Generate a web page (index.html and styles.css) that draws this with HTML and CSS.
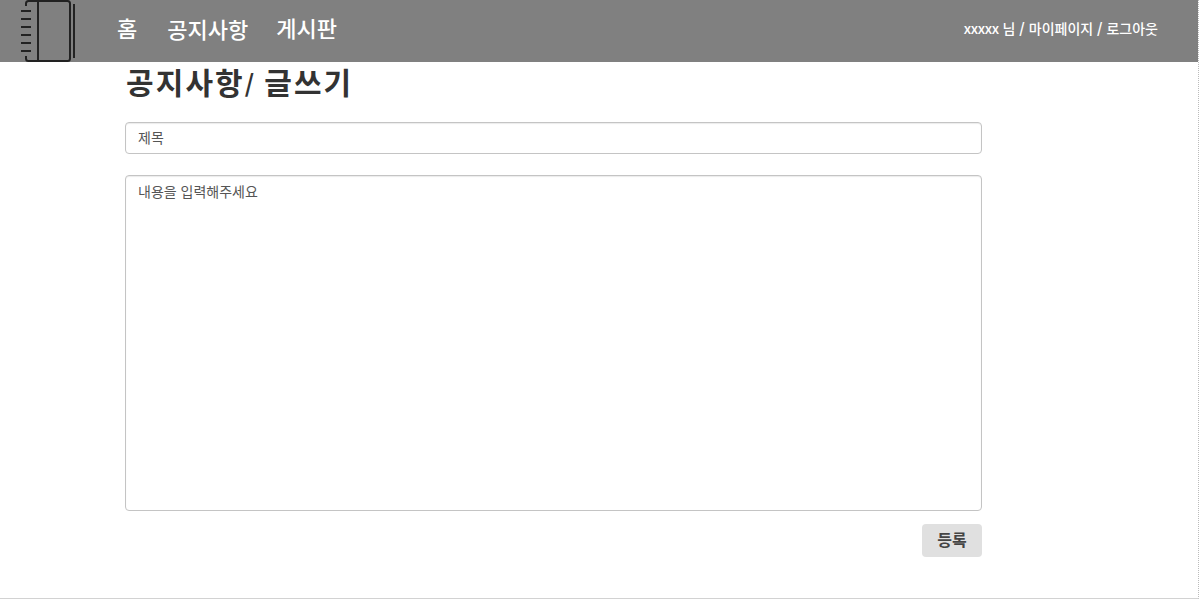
FILE: index.html
```
<!DOCTYPE html>
<html lang="ko">
<head>
    <meta charset="UTF-8">
    <title>공지사항 글쓰기</title>
    <link rel="stylesheet" href="styles.css">
</head>
<body>
    <div class="page">
        <header class="header">
            <a class="logo" href="#">
                <svg width="56" height="62" viewBox="0 0 56 62" fill="none" stroke="#222" stroke-width="2">
                    <path d="M6 6V3.500Q6 1 8.500 1H47.500Q50 1 50 3.500V58.500Q50 61 47.500 61H8.500Q6 61 6 58.500V56"/>
                    <path d="M18 1V61M54 4V58"/>
                    <path d="M1 11H11M1 19H11M1 27H11M1 35H11M1 43H11M1 51H11"/>
                </svg>
            </a>
            <nav class="menu">
                <a class="home" href="#">홈</a>
                <a class="notice" href="#">공지사항</a>
                <a class="board" href="#">게시판</a>
            </nav>
            <div class="user">
                <span class="name">xxxxx</span> 님 <b>/</b> <a href="#">마이페이지</a> <b>/</b> <a href="#">로그아웃</a>
            </div>
        </header>
        <form class="write">
            <h1>공지사항<span class="slash">/</span> 글쓰기</h1>
            <input class="field title" type="text" placeholder="제목">
            <textarea class="field content" placeholder="내용을 입력해주세요"></textarea>
            <button class="submit" type="button">등록</button>
        </form>
    </div>
</body>
</html>
```
FILE: styles.css
```
* {
    box-sizing: border-box;
}
body {
    margin: 0;
    background-color: white;
    color: #333;
    font-family: "Noto Sans CJK KR", sans-serif;
}
a {
    color: inherit;
    text-decoration: none;
}
.page {
    height: 599px;
    border-right: 1px dotted #bbb;
    border-bottom: 1px solid #d2d2d2;
}
.header {
    display: flex;
    height: 62px;
    padding-left: 20px;
    padding-right: 40px;
    background-color: #808080;
    color: white;
}
.logo {
    width: 97px;
    height: 62px;
}
.logo svg {
    display: block;
}
.menu {
    display: flex;
    font-size: 22px;
    font-weight: 500;
    line-height: 32px;
    padding-top: 11px;
}
.notice {
    margin-left: 30px;
    padding-top: 1px;
}
.board {
    margin-left: 28px;
}
.user {
    margin-left: auto;
    padding-top: 18px;
    font-size: 14px;
    font-weight: 500;
    line-height: 20px;
}
.name {
    letter-spacing: -0.4px;
}
.write {
    display: flex;
    flex-direction: column;
    width: 857px;
    margin-left: 125px;
}
h1 {
    margin: 0;
    height: 60px;
    padding-left: 1px;
    font-size: 30px;
    font-weight: bold;
    line-height: 38px;
    letter-spacing: 2.1px;
}
.slash {
    font-size: 24px;
    letter-spacing: -0.5px;
}
.field {
    border: 1px solid #c4c4c4;
    border-radius: 4px;
    box-shadow: inset 0 1px 1px rgba(0, 0, 0, 0.08);
    background-color: white;
    font-family: inherit;
    font-size: 14px;
    line-height: 20px;
    outline: none;
}
.field::placeholder {
    color: #555;
    opacity: 1;
}
.title {
    height: 32px;
    padding: 0 12px 3px;
}
.content {
    height: 336px;
    margin-top: 21px;
    padding: 5px 12px;
    resize: none;
}
.submit {
    align-self: flex-end;
    width: 60px;
    height: 33px;
    margin-top: 13px;
    padding: 0 0 3px;
    border: none;
    border-radius: 4px;
    background-color: #e0e0e0;
    color: #444;
    font-family: inherit;
    font-size: 16px;
    font-weight: bold;
}
```
